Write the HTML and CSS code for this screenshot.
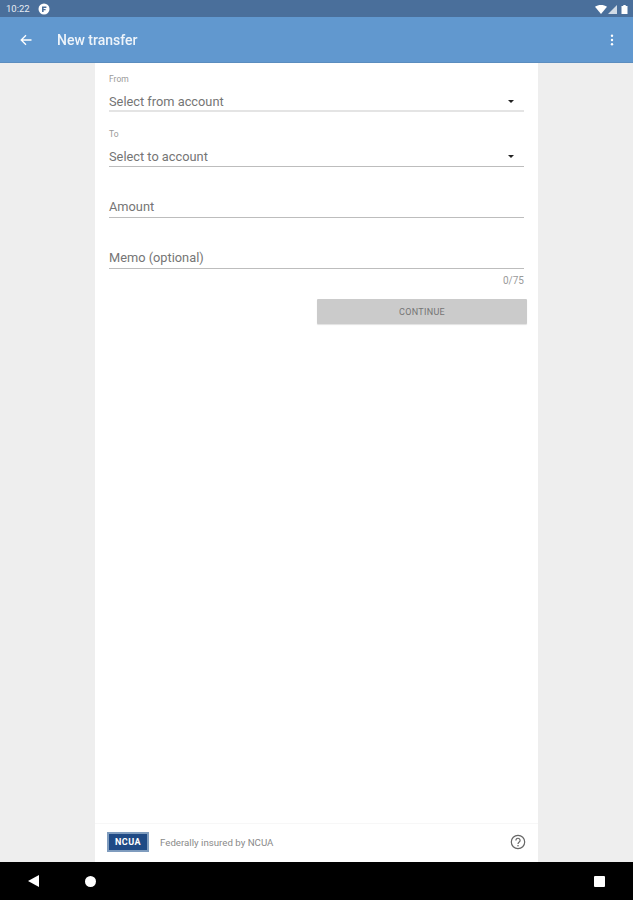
FILE: index.html
```html
<!DOCTYPE html>
<html lang="en">
<head>
<meta charset="utf-8">
<title>New transfer</title>
<link rel="stylesheet" href="styles.css">
</head>
<body>
<div class="screen">
  <div class="statusbar">
    <div class="status-left">
      <span class="clock">10:22</span>
      <svg class="status-app" viewBox="0 0 12 12"><circle cx="6" cy="6" r="5.5" fill="#fff"/><path d="M4 9V3.6h4.4v1.5H5.6v.9h2v1.3h-2V9z" fill="#4a6f9b"/></svg>
    </div>
    <div class="status-right">
      <svg class="st-wifi" viewBox="0 0 12 9"><path d="M0 1.8C3.4-.6 8.6-.6 12 1.8L6 9z" fill="#fff"/></svg>
      <svg class="st-signal" viewBox="0 0 9 9"><path d="M9 0v9H0z" fill="#fff" fill-opacity=".75"/></svg>
      <svg class="st-batt" viewBox="0 0 6 9"><path d="M1.8 0h2.4v1H6v8H0V1h1.8z" fill="#fff"/></svg>
    </div>
  </div>
  <header class="appbar">
    <svg class="back" viewBox="0 0 12 12"><path d="M11.5 6H1.5M6 1.2 1.2 6 6 10.8" fill="none" stroke="#fff" stroke-width="1.3"/></svg>
    <h1 class="title">New transfer</h1>
    <svg class="more" viewBox="0 0 4 12"><circle cx="2" cy="1.8" r="1.2" fill="#fff"/><circle cx="2" cy="6" r="1.2" fill="#fff"/><circle cx="2" cy="10.2" r="1.2" fill="#fff"/></svg>
  </header>
  <main class="main">
    <section class="panel">
      <form class="form">
        <div class="field field-from">
          <div class="label">From</div>
          <div class="control"><span>Select from account</span><i class="caret"></i></div>
        </div>
        <div class="field field-to">
          <div class="label">To</div>
          <div class="control control-dark"><span>Select to account</span><i class="caret"></i></div>
        </div>
        <div class="field field-amount">
          <div class="control control-dark control-input"><span>Amount</span></div>
        </div>
        <div class="field field-memo">
          <div class="control control-dark control-input"><span>Memo (optional)</span></div>
          <div class="counter">0/75</div>
        </div>
        <div class="actions"><button type="button" class="continue">CONTINUE</button></div>
      </form>
      <footer class="footer">
        <div class="ncua"><span>NCUA</span></div>
        <span class="insured">Federally insured by NCUA</span>
        <svg class="help" viewBox="0 0 16 16"><circle cx="8" cy="8" r="6.7" fill="none" stroke="#666" stroke-width="1.2"/><path d="M5.9 6.4a2.1 2.1 0 1 1 3.3 1.7c-.8.6-1.2 1-1.2 1.9" fill="none" stroke="#666" stroke-width="1.2"/><circle cx="8" cy="11.8" r=".8" fill="#666"/></svg>
      </footer>
    </section>
  </main>
  <nav class="navbar">
    <svg class="nav-back" viewBox="0 0 11 12"><path d="M11 0v12L0 6z" fill="#fff"/></svg>
    <span class="nav-home"></span>
    <span class="nav-recent"></span>
  </nav>
</div>
</body>
</html>
```
FILE: styles.css
```css
* { box-sizing: border-box; }
html, body { margin: 0; padding: 0; }
body { font-family: Roboto, "Liberation Sans", sans-serif; background: #eee; color: #757575; }
.screen { width: 633px; height: 900px; display: flex; flex-direction: column; overflow: hidden; filter: blur(.6px); }

.statusbar { height: 17px; flex: none; background: #4a6f9b; display: flex; align-items: center; justify-content: space-between; padding: 0 5px 0 6px; }
.status-left { display: flex; align-items: center; gap: 7px; }
.clock { font-size: 9.5px; color: #e8edf3; width: 25px; }
.status-app { width: 12px; height: 12px; display: block; }
.status-right { display: flex; align-items: center; gap: 1px; padding-top: 1px; }
.st-wifi { width: 12px; height: 9px; display: block; }
.st-signal { width: 9px; height: 9px; display: block; margin-right: 3px; }
.st-batt { width: 7px; height: 9px; display: block; }

.appbar { height: 46px; flex: none; background: #6198cf; border-bottom: 1px solid #5b8dbf; display: flex; align-items: center; padding: 0 19px 0 20px; margin-bottom: -1px; position: relative; }
.back { width: 12px; height: 12px; display: block; }
.title { margin: 0 0 0 25px; flex: 1; font-size: 14px; font-weight: 500; color: #eef4fa; line-height: 20px; }
.more { width: 4px; height: 12px; display: block; }

.main { flex: 1; min-height: 0; display: flex; justify-content: center; }
.panel { width: 443px; background: #fff; display: flex; flex-direction: column; }
.form { flex: 1; padding: 0 14px; display: flex; flex-direction: column; }

.label { font-size: 8.5px; line-height: 12px; color: #9a9a9a; }
.control { display: flex; align-items: center; justify-content: space-between; height: 22px; padding: 2px 10px 0 0; font-size: 12.8px; color: #757575; border-bottom: 2px solid #e4e4e4; }
.control-dark { height: 20px; padding-top: 0; border-bottom: 1px solid #bdbdbd; }
.control-input { padding-bottom: 2px; }
.caret { width: 0; height: 0; border-left: 3px solid transparent; border-right: 3px solid transparent; border-top: 3px solid #222; display: block; }

.field-from { padding-top: 11px; }
.field-from .control { margin-top: 5px; }
.field-to { padding-top: 16px; }
.field-to .control { margin-top: 7px; }
.field-amount { padding-top: 31px; }
.field-memo { padding-top: 31px; }
.counter { font-size: 10px; line-height: 12px; color: #9a9a9a; text-align: right; margin-top: 6px; }

.actions { display: flex; justify-content: flex-end; margin: 12px -3px 0 0; }
.continue { width: 210px; height: 25px; border: 0; border-radius: 1px; background: #cbcbcb; color: #757575; font-family: inherit; font-size: 9px; font-weight: 400; letter-spacing: .3px; padding: 0; box-shadow: 0 1px 1px rgba(0,0,0,.12); }

.footer { height: 39px; flex: none; border-top: 1px solid #f7f7f7; display: flex; align-items: center; padding: 0 12px 2px; }
.ncua { width: 42px; height: 20px; background: #1f4a85; border: 2px solid #7f9cbe; display: flex; align-items: center; justify-content: center; }
.ncua span { font-size: 9px; font-weight: 700; color: #fff; letter-spacing: .5px; }
.insured { flex: 1; margin-left: 11px; font-size: 9.7px; color: #8a8a8a; }
.help { width: 16px; height: 16px; display: block; margin-top: -1px; }

.navbar { height: 38px; flex: none; background: #000; display: flex; align-items: center; padding: 0 28px; }
.nav-back { width: 11px; height: 12px; display: block; }
.nav-home { width: 11px; height: 11px; border-radius: 50%; background: #fff; margin-left: 46px; }
.nav-recent { width: 11px; height: 11px; border-radius: 1px; background: #fff; margin-left: auto; }
```
